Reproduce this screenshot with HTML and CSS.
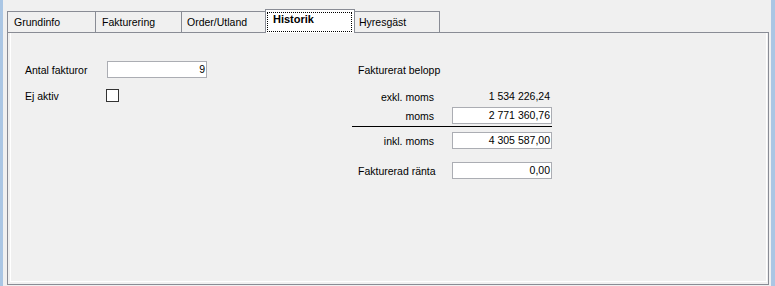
FILE: index.html
```html
<!DOCTYPE html>
<html lang="sv">
<head>
<meta charset="utf-8">
<title>Historik</title>
<link rel="stylesheet" href="styles.css">
</head>
<body>
<div class="edge-l"></div>
<div class="main">
  <div class="tabs">
    <div class="tab t-grund">Grundinfo</div>
    <div class="tab t-fakt">Fakturering</div>
    <div class="tab t-order">Order/Utland</div>
    <div class="tab active"><span class="focus">Historik</span></div>
    <div class="tab t-hyres">Hyresgäst</div>
  </div>
  <div class="panel">
    <div class="page">
      <div class="left">
        <div class="row">
          <div class="lab-l">Antal fakturor</div>
          <div class="box">9</div>
        </div>
        <div class="row row-check">
          <div class="lab-l lab-check">Ej aktiv</div>
          <div class="check"></div>
        </div>
      </div>
      <div class="right">
        <div class="title">Fakturerat belopp</div>
        <div class="r r-exkl">
          <div class="lab">exkl. moms</div>
          <div class="val">1 534 226,24</div>
        </div>
        <div class="r r-moms">
          <div class="lab">moms</div>
          <div class="box">2 771 360,76</div>
        </div>
        <div class="rule"></div>
        <div class="r r-inkl">
          <div class="lab">inkl. moms</div>
          <div class="box">4 305 587,00</div>
        </div>
        <div class="r r-ranta">
          <div class="lab lab-left">Fakturerad ränta</div>
          <div class="box">0,00</div>
        </div>
      </div>
    </div>
  </div>
</div>
<div class="edge-r"></div>
</body>
</html>
```

FILE: styles.css
```css
html, body {
  margin: 0;
  padding: 0;
}

body {
  background: #f0f0f0;
  font-family: "Liberation Sans", Arial, sans-serif;
  font-size: 10.5px;
  color: #000;
  display: flex;
  height: 286px;
  overflow: hidden;
}

.edge-l {
  flex: none;
  width: 3px;
  background: #aac6e4;
}

.edge-r {
  flex: none;
  width: 4px;
  margin-left: 2px;
  background: #aac6e4;
}

.main {
  flex: 1;
  margin-left: 4px;
  display: flex;
  flex-direction: column;
}

/* Tabs */
.tabs {
  display: flex;
  align-items: flex-end;
  padding-top: 9px;
  height: 23px;
}

.tab {
  box-sizing: border-box;
  height: 21px;
  border-left: 1px solid #898c95;
  border-top: 1px solid #898c95;
  padding-left: 6px;
  line-height: 20px;
  white-space: nowrap;
}

.t-grund { width: 88px; }
.t-fakt { width: 86px; }
.t-order { width: 84px; padding-left: 5px; }

.tab.active {
  width: 90px;
  height: 24px;
  margin-bottom: -1px;
  padding: 0;
  background: #fff;
  border-right: 1px solid #898c95;
  position: relative;
  z-index: 1;
  font-weight: bold;
  font-size: 11px;
}

.focus {
  display: block;
  box-sizing: border-box;
  height: 20px;
  margin: 2px 2px 0 1px;
  border: 1px dotted #000;
  padding-left: 5px;
  line-height: 13px;
}

.t-hyres {
  width: 85px;
  border-left: none;
  border-right: 1px solid #898c95;
  padding-left: 4px;
}

/* Panel */
.panel {
  box-sizing: border-box;
  height: 253px;
  border: 1px solid #898c95;
  display: flex;
  flex-direction: column;
}

.page {
  flex: 1;
  margin: 0 1px 2px 2px;
  border: 1px solid #fff;
  border-top: none;
  display: flex;
}

/* Left column */
.left {
  box-sizing: border-box;
  width: 341px;
  padding: 28px 0 0 14px;
}

.row {
  display: flex;
  align-items: center;
}

.lab-l {
  width: 82px;
  white-space: nowrap;
}

.row-check {
  margin-top: 11px;
}

.lab-check {
  width: 81px;
}

.check {
  box-sizing: border-box;
  width: 13px;
  height: 13px;
  border: 1px solid #333;
  background: #fff;
}

.box {
  box-sizing: border-box;
  width: 100px;
  height: 17px;
  border: 1px solid #abadb3;
  background: #fff;
  text-align: right;
  padding-right: 1px;
  line-height: 15px;
  white-space: nowrap;
}

/* Right column */
.right {
  width: 200px;
  padding-top: 29px;
}

.title {
  height: 17px;
  line-height: 17px;
  padding-left: 6px;
}

.r {
  display: flex;
  align-items: center;
  height: 17px;
}

.r-exkl { margin-top: 9px; }
.r-moms { margin-top: 2px; }
.r-inkl { margin-top: 5px; }
.r-ranta { margin-top: 13px; }

.lab {
  box-sizing: border-box;
  width: 100px;
  text-align: right;
  padding-right: 18px;
  white-space: nowrap;
}

.lab-left {
  text-align: left;
  padding-left: 6px;
  padding-right: 0;
}

.val {
  box-sizing: border-box;
  width: 100px;
  text-align: right;
  padding-right: 2px;
  line-height: 17px;
  white-space: nowrap;
}

.rule {
  margin-top: 2px;
  width: 200px;
  height: 1px;
  background: #000;
}
```
